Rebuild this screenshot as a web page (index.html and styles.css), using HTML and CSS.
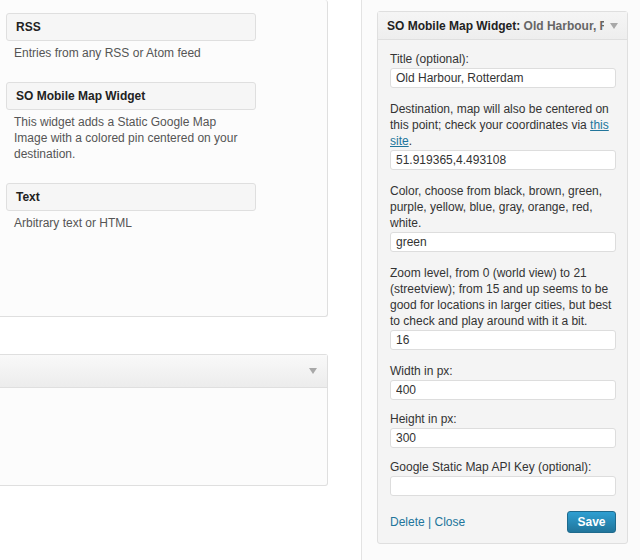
FILE: index.html
```html
<!DOCTYPE html>
<html>
<head>
<meta charset="utf-8">
<link rel="stylesheet" href="styles.css">
</head>
<body>
<div class="page">
  <div class="left-col">
    <div class="panel panel-available">
      <div class="avail-widget">
        <div class="avail-title">RSS</div>
        <div class="avail-desc">Entries from any RSS or Atom feed</div>
      </div>
      <div class="avail-widget">
        <div class="avail-title">SO Mobile Map Widget</div>
        <div class="avail-desc">This widget adds a Static Google Map Image with a colored pin centered on your destination.</div>
      </div>
      <div class="avail-widget">
        <div class="avail-title">Text</div>
        <div class="avail-desc">Arbitrary text or HTML</div>
      </div>
    </div>
    <div class="panel panel-inactive">
      <div class="panel-head"><span class="arrow"></span></div>
      <div class="panel-body"></div>
    </div>
  </div>
  <div class="right-col">
    <div class="widget">
      <div class="widget-top">
        <div class="widget-title">SO Mobile Map Widget: <span class="in-title">Old Harbour, Rotterdam</span></div>
        <span class="arrow"></span>
      </div>
      <div class="widget-inside">
        <p><label>Title (optional):</label><input class="field" type="text" value="Old Harbour, Rotterdam"></p>
        <p><label>Destination, map will also be centered on this point; check your coordinates via <a href="#">this site</a>.</label><input class="field" type="text" value="51.919365,4.493108"></p>
        <p><label>Color, choose from black, brown, green, purple, yellow, blue, gray, orange, red, white.</label><input class="field" type="text" value="green"></p>
        <p><label>Zoom level, from 0 (world view) to 21 (streetview); from 15 and up seems to be good for locations in larger cities, but best to check and play around with it a bit.</label><input class="field" type="text" value="16"></p>
        <p class="tight"><label>Width in px:</label><input class="field" type="text" value="400"></p>
        <p class="tight"><label>Height in px:</label><input class="field" type="text" value="300"></p>
        <p><label>Google Static Map API Key (optional):</label><input class="field" type="text" value=""></p>
        <div class="controls">
          <div class="links"><a href="#">Delete</a> | <a href="#">Close</a></div>
          <button class="save" type="button">Save</button>
        </div>
      </div>
    </div>
  </div>
</div>
</body>
</html>
```
FILE: styles.css
```css
html, body {
  margin: 0;
  padding: 0;
  background: #ffffff;
  font-family: "Liberation Sans", Arial, sans-serif;
  font-size: 12px;
  color: #333;
}

.page {
  display: flex;
  height: 560px;
  overflow: hidden;
}

.left-col {
  width: 328px;
  flex: none;
  margin-right: 33px;
}

.panel {
  background: #fcfcfc;
  border: 1px solid #dfdfdf;
  border-left: none;
  border-radius: 0 3px 3px 0;
  box-sizing: border-box;
}

.panel-available {
  border-top: none;
  height: 317px;
  padding: 13px 0 0 6px;
}

.avail-widget {
  width: 250px;
  margin-bottom: 21px;
}

.avail-title {
  height: 28px;
  box-sizing: border-box;
  border: 1px solid #dfdfdf;
  border-radius: 3px;
  background: #f6f6f6;
  font-weight: bold;
  color: #222;
  padding: 0 9px;
  line-height: 26px;
}

.avail-desc {
  margin-top: 4px;
  padding-left: 8px;
  padding-right: 4px;
  line-height: 16px;
  color: #555;
}

.panel-inactive {
  margin-top: 37px;
  height: 132px;
}

.panel-head {
  height: 33px;
  box-sizing: border-box;
  border-bottom: 1px solid #dfdfdf;
  background: linear-gradient(#f9f9f9, #ececec);
  display: flex;
  justify-content: flex-end;
  align-items: center;
  padding-right: 10px;
}

.arrow {
  width: 0;
  height: 0;
  border-left: 4px solid transparent;
  border-right: 4px solid transparent;
  border-top: 6px solid #a8a8a8;
}

.right-col {
  flex: 1;
  border-left: 1px solid #e3e3e3;
  background: #fbfbfb;
  padding: 11px 12px 0 15px;
}

.widget {
  width: 251px;
  box-sizing: border-box;
  border: 1px solid #dfdfdf;
  border-radius: 3px;
  background: #f4f4f4;
}

.widget-top {
  height: 28px;
  box-sizing: border-box;
  border-bottom: 1px solid #dfdfdf;
  background: linear-gradient(#f5f5f5, #eeeeee);
  display: flex;
  align-items: center;
  padding: 0 9px 0 9px;
  gap: 6px;
}

.widget-title {
  flex: 1;
  white-space: nowrap;
  overflow: hidden;
  font-weight: bold;
  color: #222;
  line-height: 26px;
}

.in-title {
  color: #666;
}

.widget-inside {
  padding: 11px 11px 10px 12px;
}

.widget-inside p {
  margin: 0 0 13px;
}

.widget-inside p.tight {
  margin-bottom: 11px;
}

.widget-inside label {
  display: block;
  line-height: 16px;
  color: #333;
}

.widget-inside a {
  color: #21759b;
}

.field {
  display: block;
  width: 100%;
  height: 20px;
  box-sizing: border-box;
  margin: 1px 0 0;
  padding: 0 5px;
  border: 1px solid #dddddd;
  border-radius: 3px;
  background: #fff;
  font-family: "Liberation Sans", Arial, sans-serif;
  font-size: 12px;
  color: #333;
}

.controls {
  display: flex;
  justify-content: space-between;
  align-items: center;
  margin-top: 15px;
}

.links {
  color: #21759b;
}

.links a {
  text-decoration: none;
}

.save {
  width: 49px;
  height: 22px;
  box-sizing: border-box;
  border: 1px solid #1e6a8d;
  border-radius: 3px;
  background: linear-gradient(#2e9fd2, #21759b);
  color: #fff;
  font-family: "Liberation Sans", Arial, sans-serif;
  font-size: 12px;
  font-weight: bold;
  padding: 0;
}
```
